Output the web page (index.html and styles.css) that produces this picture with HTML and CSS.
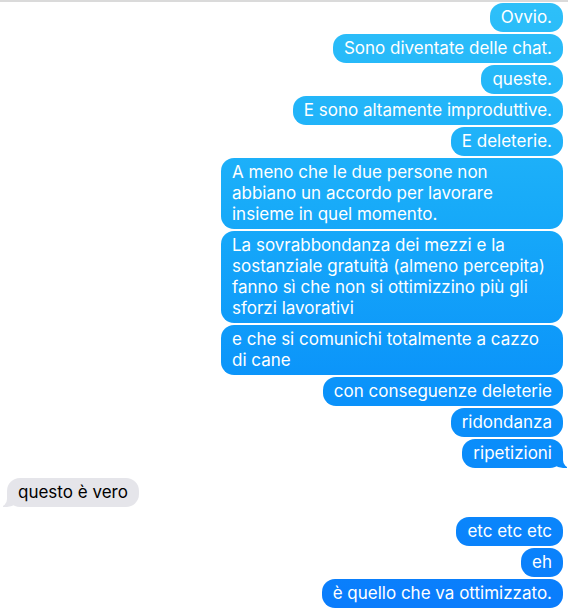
FILE: index.html
```html
<!DOCTYPE html>
<html lang="it">

<head>
    <meta charset="UTF-8">
    <meta name="viewport" content="width=device-width, initial-scale=1.0">
    <title>Messaggi</title>
    <link rel="stylesheet" href="styles.css">
</head>

<body>
    <div class="chat">
        <div class="group sent">
            <p class="msg">Ovvio.</p>
            <p class="msg">Sono diventate delle chat.</p>
            <p class="msg">queste.</p>
            <p class="msg">E sono altamente improduttive.</p>
            <p class="msg">E deleterie.</p>
            <p class="msg">A meno che le due persone non abbiano un accordo per lavorare insieme in quel momento.</p>
            <p class="msg">La sovrabbondanza dei mezzi e la sostanziale gratuità (almeno percepita) fanno sì che non si ottimizzino più gli sforzi lavorativi</p>
            <p class="msg">e che si comunichi totalmente a cazzo di cane</p>
            <p class="msg">con conseguenze deleterie</p>
            <p class="msg">ridondanza</p>
            <p class="msg tail">ripetizioni</p>
        </div>

        <div class="group received">
            <p class="msg tail">questo è vero</p>
        </div>

        <div class="group sent">
            <p class="msg">etc etc etc</p>
            <p class="msg">eh</p>
            <p class="msg">è quello che va ottimizzato.</p>
        </div>
    </div>
</body>

</html>
```

FILE: styles.css
```css
* {
    margin: 0;
    padding: 0;
    box-sizing: border-box;
}

body {
    background-color: #fff;
    font-family: "Inter", "Liberation Sans", sans-serif;
    font-size: 17px;
    border-top: 2px solid #dadada;
}

.chat {
    display: flex;
    flex-direction: column;
    gap: 10px;
    padding: 1px 5px 0 7px;
}

.group {
    display: flex;
    flex-direction: column;
    gap: 2px;
}

.sent {
    align-items: flex-end;
}

.received {
    align-items: flex-start;
}

.msg {
    position: relative;
    max-width: 342px;
    padding: 4px 11px;
    line-height: 21px;
    border-radius: 13px;
}

.sent .msg,
.sent .msg.tail::before {
    color: #fff;
    background: linear-gradient(to bottom, #2ec0f9 0%, #17aaf9 35%, #0a92fa 65%, #0a7cfc 100%);
    background-attachment: fixed;
}

.received .msg,
.received .msg.tail::before {
    color: #000;
    background-color: #e5e5ea;
}

/* coda della bolla */
.msg.tail::before,
.msg.tail::after {
    content: "";
    position: absolute;
    bottom: 0;
    height: 14px;
}

.sent .msg.tail::before {
    right: -4px;
    width: 16px;
    border-bottom-left-radius: 12px 10px;
}

.sent .msg.tail::after {
    right: -8px;
    width: 8px;
    background-color: #fff;
    border-bottom-left-radius: 8px;
}

.received .msg.tail::before {
    left: -4px;
    width: 16px;
    border-bottom-right-radius: 12px 10px;
}

.received .msg.tail::after {
    left: -8px;
    width: 8px;
    background-color: #fff;
    border-bottom-right-radius: 8px;
}

.msg.tail {
    z-index: 0;
}

.msg.tail::before {
    z-index: -1;
}
```
